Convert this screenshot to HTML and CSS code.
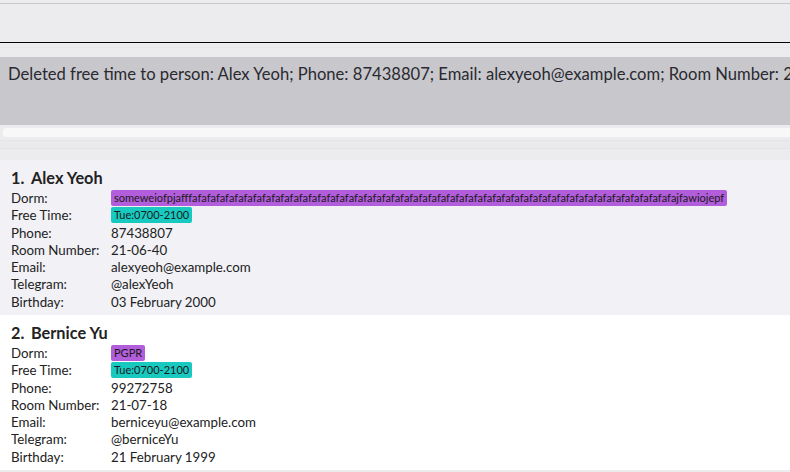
FILE: index.html
```html
<!DOCTYPE html>
<html>
<head>
<meta charset="utf-8">
<link rel="stylesheet" href="styles.css">
</head>
<body>
<div class="app">
  <div class="menubar"></div>
  <div class="command"></div>
  <div class="gap-top"></div>
  <div class="result">Deleted free time to person: Alex Yeoh; Phone: 87438807; Email: alexyeoh@example.com; Room Number: 21-06-40; Birthday: 03 February 2000</div>
  <div class="scroll-area"><div class="hbar"></div></div>
  <div class="stripes"></div>
  <div class="list">
    <div class="card odd">
      <div class="title"><span class="idx">1.</span>Alex Yeoh</div>
      <div class="fields">
        <div class="label">Dorm:</div><div class="value"><span class="tag dorm">someweiofpjafffafafafafafafafafafafafafafafafafafafafafafafafafafafafafafafafafafafafafafafafafafafafafafafafafafafafafajfawiojepf</span></div>
        <div class="label">Free Time:</div><div class="value"><span class="tag time">Tue:0700-2100</span></div>
        <div class="label">Phone:</div><div class="value">87438807</div>
        <div class="label">Room Number:</div><div class="value">21-06-40</div>
        <div class="label">Email:</div><div class="value">alexyeoh@example.com</div>
        <div class="label">Telegram:</div><div class="value">@alexYeoh</div>
        <div class="label">Birthday:</div><div class="value">03 February 2000</div>
      </div>
    </div>
    <div class="card even">
      <div class="title"><span class="idx">2.</span>Bernice Yu</div>
      <div class="fields">
        <div class="label">Dorm:</div><div class="value"><span class="tag dorm">PGPR</span></div>
        <div class="label">Free Time:</div><div class="value"><span class="tag time">Tue:0700-2100</span></div>
        <div class="label">Phone:</div><div class="value">99272758</div>
        <div class="label">Room Number:</div><div class="value">21-07-18</div>
        <div class="label">Email:</div><div class="value">berniceyu@example.com</div>
        <div class="label">Telegram:</div><div class="value">@berniceYu</div>
        <div class="label">Birthday:</div><div class="value">21 February 1999</div>
      </div>
    </div>
  </div>
</div>
</body>
</html>
```

FILE: styles.css
```css
html, body {
  margin: 0;
  padding: 0;
}
body {
  background: #ececee;
  font-family: Lato, "Noto Sans", sans-serif;
  color: #222;
  width: 790px;
  height: 472px;
  overflow: hidden;
}
.app {
  display: flex;
  flex-direction: column;
}
.menubar {
  height: 3px;
  border-bottom: 1px solid #c8c8ca;
}
.command {
  height: 38px;
  border-bottom: 1px solid #000;
}
.gap-top {
  height: 14px;
  background: linear-gradient(#ececee 0 4px, #e8e8ea 4px 5px, #ececee 5px);
}
.result {
  height: 68px;
  box-sizing: border-box;
  background: #c8c7cc;
  padding: 6px 8px;
  font-size: 16.6px;
  line-height: 22px;
  white-space: nowrap;
  overflow: hidden;
  color: #2a2a30;
}
.scroll-area {
  padding: 3px 0 1px 3px;
}
.hbar {
  height: 9px;
  background: #f8f8f8;
  border-radius: 3px 0 0 3px;
}
.stripes {
  height: 22px;
  background: linear-gradient(#ececee 0 2px, #e4e4e6 2px 3px, #eaeaec 3px 10px, #e4e4e6 10px 11px, #ececee 11px);
}
.list {
  display: flex;
  flex-direction: column;
}
.card {
  height: 155px;
  box-sizing: border-box;
  padding: 8px 11px 0;
}
.card.odd { background: #f1f1f6; }
.card.even { background: #ffffff; }
.title {
  font-size: 16.3px;
  font-weight: bold;
  line-height: 20px;
  color: #222;
}
.idx {
  display: inline-block;
  width: 20px;
}
.fields {
  display: grid;
  grid-template-columns: 100px 1fr;
  grid-auto-rows: 17.3px;
  font-size: 13.3px;
  line-height: 17.3px;
  margin-top: 2px;
  color: #222;
}
.value {
  white-space: nowrap;
}
.tag {
  display: inline-block;
  font-size: 11px;
  line-height: 16px;
  padding: 0 3px;
  border-radius: 2px;
  color: #1a1a1a;
  vertical-align: 1px;
}
.tag.dorm { background: #b25ddb; }
.tag.time { background: #18c9c0; }
```
